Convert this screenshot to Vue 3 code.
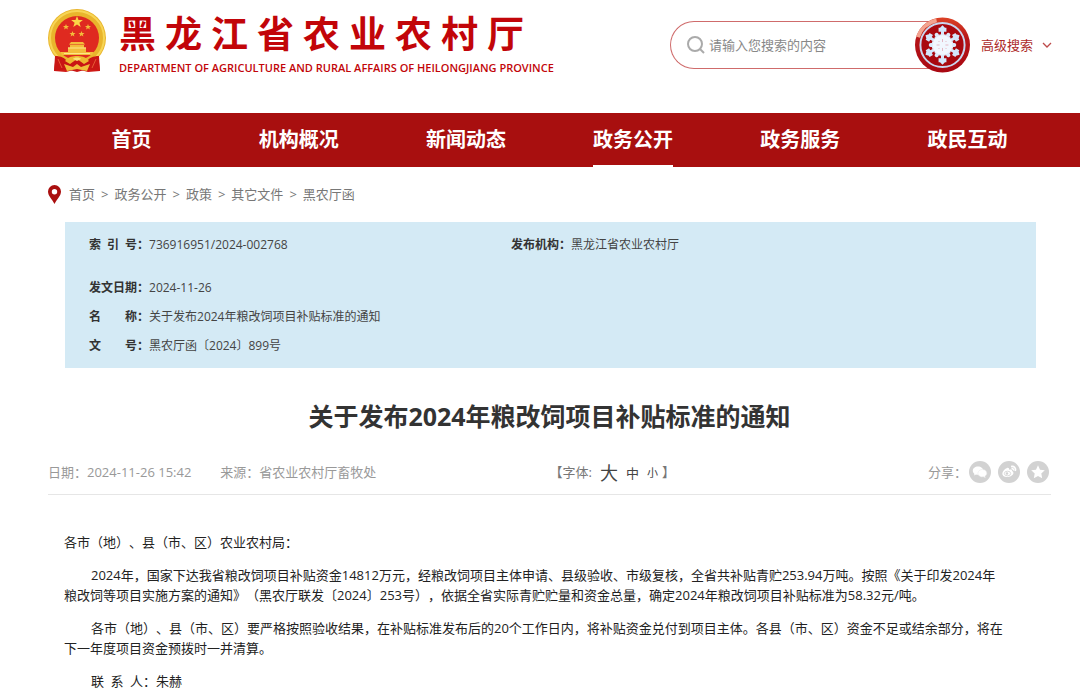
<script setup>
import { ref } from 'vue'

const siteName = [...'黑龙江省农业农村厅']
const keyword = ref('')
const navItems = ['首页', '机构概况', '新闻动态', '政务公开', '政务服务', '政民互动']
const activeNav = '政务公开'
const crumbs = ['首页', '政务公开', '政策', '其它文件', '黑农厅函']
const info = [
  { label: '索 引 号', value: '736916951/2024-002768' },
  { label: '发布机构', value: '黑龙江省农业农村厅' },
  { label: '发文日期', value: '2024-11-26', wide: true },
  { label: '名 称', value: '关于发布2024年粮改饲项目补贴标准的通知', wide: true },
  { label: '文 号', value: '黑农厅函〔2024〕899号', wide: true },
]
const arms = [0, 60, 120, 180, 240, 300]
</script>

<template>
  <div class="page">
    <header class="header">
      <a class="brand" href="#">
        <svg class="emblem" viewBox="0 0 58 64" aria-hidden="true">
          <path d="M8 45 L6 62 L18 63 L29 60 L40 63 L52 62 L50 45 Z" fill="#cf1a17" />
          <circle cx="29" cy="29" r="29" fill="#e9b52c" />
          <circle cx="29" cy="29" r="27" fill="none" stroke="#f7d555" stroke-width="2" />
          <circle cx="29" cy="29" r="22" fill="#df2a20" />
          <path d="M29 7l1.500 4.100h4.400l-3.500 2.700 1.300 4.200-3.700-2.500-3.700 2.500 1.300-4.200-3.500-2.700h4.400z" fill="#fbd646" />
          <g fill="#f3bd3b">
            <path d="M18 15l.8 2h2.200l-1.700 1.400.6 2.200-1.900-1.300-1.900 1.300.6-2.200-1.700-1.400h2.200z" />
            <path d="M40 15l.8 2h2.200l-1.700 1.400.6 2.200-1.900-1.300-1.900 1.300.6-2.200-1.700-1.400h2.200z" />
            <path d="M24.500 22l.8 2h2.200l-1.700 1.400.6 2.200-1.900-1.300-1.900 1.300.6-2.200-1.700-1.400h2.200z" />
            <path d="M33.500 22l.8 2h2.200l-1.700 1.400.6 2.200-1.900-1.300-1.900 1.300.6-2.200-1.700-1.400h2.200z" />
            <path d="M23 33h12l2 2.500H21z" />
            <path d="M22 36h14v2.500h2V43H20v-4.500h2z" />
            <path d="M12 43h34l-2 3H14z" />
          </g>
          <path d="M20 39h18M16 44.500h26" stroke="#fce68a" />
          <path d="M0 46c5 0 9 1 12 3l8 3c-3 4-7 7-14 8zM58 46c-5 0-9 1-12 3l-8 3c3 4 7 7 14 8z" fill="none" />
          <path d="M7 47c6 0 10 2 13 6l9-3 9 3c3-4 7-6 13-6l1 15-12-2-11 3-11-3-12 2z" fill="#c91614" />
          <path d="M19 50c3-4 17-4 20 0l2 2-5 3-7-5-7 5-5-3z" fill="#eeb931" />
          <path d="M25 50c1-2 7-2 8 0l-4 2z" fill="#fbe07a" />
          <path d="M16 55l9 3 4-3 4 3 9-3-3 7-10-2-10 2z" fill="#f0c03a" />
          <path d="M10 50l4 9M48 50l-4 9" stroke="#e65b35" />
        </svg>
        <span class="brand-text">
          <span class="site-name"><span v-for="(c, i) in siteName" :key="i">{{ c }}</span></span>
          <span class="site-en">DEPARTMENT OF AGRICULTURE AND RURAL AFFAIRS OF HEILONGJIANG PROVINCE</span>
        </span>
      </a>

      <form class="search" @submit.prevent>
        <label class="search-box">
          <svg width="18" height="18" viewBox="0 0 18 18" fill="none" stroke="#aaa" stroke-width="2" aria-hidden="true">
            <circle cx="8" cy="8" r="7" />
            <path d="M13 13l4 4" />
          </svg>
          <input v-model="keyword" type="text" placeholder="请输入您搜索的内容" aria-label="搜索" />
        </label>
        <button class="search-btn" type="submit" aria-label="搜索">
          <svg width="55" height="56" viewBox="0 0 56 56" aria-hidden="true">
            <defs>
              <linearGradient id="rim" x1="0" y1="0" x2="0" y2="1">
                <stop offset="0" stop-color="#dc4226" />
                <stop offset="0.400" stop-color="#b51418" />
                <stop offset="1" stop-color="#a90812" />
              </linearGradient>
            </defs>
            <circle cx="28" cy="28" r="28" fill="url(#rim)" />
            <path d="M3 20A26 26 0 0 1 22 3" fill="none" stroke="#f3a38f" stroke-width="4" />
            <circle cx="28" cy="28" r="22.500" fill="#a9080f" stroke="#c9d5ee" stroke-width="2" />
            <g v-for="a in arms" :key="a" :transform="`rotate(${a} 28 28)`">
              <path d="M28 28V11" stroke="#dceafb" stroke-width="3" />
              <path d="M28 8l2.500 2.500H32v4h-2.500L28 17l-1.500-2.500H24v-4h1.500z" fill="#d3e6fb" />
              <path d="M28 28V16" transform="rotate(30 28 28)" stroke="#dceafb" stroke-width="4" stroke-linecap="round" />
              <path d="M28 28V17" transform="rotate(14 28 28)" stroke="#e4effc" stroke-width="2" />
              <path d="M28 28V17" transform="rotate(-14 28 28)" stroke="#e4effc" stroke-width="2" />
            </g>
            <circle cx="28" cy="28" r="10" fill="#f1f7ff" />
            <path d="M28 22v3M28 31v3M22 28h3M31 28h3M24 24l1 1M31 31l1 1M24 32l1-1M31 25l1-1" stroke="#e2b6c2" />
          </svg>
        </button>
        <a class="advanced" href="#">
          高级搜索
          <svg width="10" height="6" viewBox="0 0 10 6" fill="none" stroke="#bd4a4a" stroke-width="1.300" aria-hidden="true"><path d="M1 1l4 4 4-4" /></svg>
        </a>
      </form>
    </header>

    <nav class="nav">
      <a v-for="n in navItems" :key="n" href="#"><span :class="{ active: n === activeNav }">{{ n }}</span></a>
    </nav>

    <div class="crumbs">
      <svg width="13" height="19" viewBox="0 0 13 19" aria-hidden="true">
        <path fill-rule="evenodd" d="M6.500 0A6.500 6.500 0 0 0 0 6.500C0 11 4 14 6.500 19 9 14 13 11 13 6.500A6.500 6.500 0 0 0 6.500 0zm0 4a2.700 2.700 0 1 1 0 5.400 2.700 2.700 0 0 1 0-5.400z" fill="#aa0f0f" />
      </svg>
      <template v-for="(c, i) in crumbs" :key="c">
        <span v-if="i" class="sep">&gt;</span>
        <a href="#">{{ c }}</a>
      </template>
    </div>

    <dl class="info">
      <div v-for="r in info" :key="r.label" class="info-row" :class="{ wide: r.wide }">
        <dt><span class="label">{{ r.label }}</span>：</dt>
        <dd>{{ r.value }}</dd>
      </div>
    </dl>

    <article>
      <h1>关于发布2024年粮改饲项目补贴标准的通知</h1>
      <div class="meta">
        <div class="meta-left">
          <span>日期：2024-11-26 15:42</span>
          <span>来源：省农业农村厅畜牧处</span>
        </div>
        <div class="sizes">
          <span>【字体:</span>
          <button type="button" class="large">大</button>
          <button type="button" class="medium">中</button>
          <button type="button" class="small">小</button>
          <span>】</span>
        </div>
        <div class="share">
          <span>分享：</span>
          <div class="share-links">
            <a href="#" aria-label="微信">
              <svg viewBox="0 0 22 22" aria-hidden="true">
                <circle cx="11" cy="11" r="11" fill="#d2d2d2" />
                <path d="M9 5.500c-3 0-5.200 1.800-5.200 4.200 0 1.300.7 2.400 1.700 3.200l-.5 1.700 2-1c3.600.9 7.200-.9 7.200-3.900 0-2.400-2.200-4.200-5.200-4.200z" fill="#fff" />
                <path d="M13.500 8.500c-2.800 0-4.600 1.700-4.600 3.700 0 2.300 2.400 4.200 5.500 3.600l1.900.9-.4-1.500c1.200-.7 1.900-1.700 1.900-2.900 0-2.100-1.900-3.800-4.300-3.800z" fill="#fff" stroke="#e6e6e6" stroke-width="0.500" />
              </svg>
            </a>
            <a href="#" aria-label="微博">
              <svg viewBox="0 0 22 22" aria-hidden="true">
                <circle cx="11" cy="11" r="11" fill="#d2d2d2" />
                <path d="M9 7c1.500-.5 2.400.2 2 1.700 2-.7 3.500-.2 2.900 1.400 3.400 1.200 1 5.900-4.600 5.900C2 16 3.500 9.500 9 7z" fill="#fff" />
                <ellipse cx="9.500" cy="12.500" rx="3.200" ry="2.300" fill="none" stroke="#d2d2d2" stroke-width="0.800" />
                <circle cx="9" cy="12.500" r="1.200" fill="#d2d2d2" />
                <path d="M13 5.500c3-.8 5.300 1.500 4.300 4.600M13.500 7.500c1.500-.2 2.300.7 2 2" fill="none" stroke="#fff" stroke-width="1.600" />
              </svg>
            </a>
            <a href="#" aria-label="收藏">
              <svg viewBox="0 0 22 22" aria-hidden="true">
                <circle cx="11" cy="11" r="11" fill="#d2d2d2" />
                <path d="M11 4.300l2 4.400 4.800.6-3.500 3.300.9 4.700-4.200-2.300-4.200 2.300.9-4.700-3.500-3.300 4.800-.6z" fill="#fff" />
              </svg>
            </a>
          </div>
        </div>
      </div>

      <div class="content">
        <p class="flush">各市（地）、县（市、区）农业农村局：</p>
        <p>2024年，国家下达我省粮改饲项目补贴资金14812万元，经粮改饲项目主体申请、县级验收、市级复核，全省共补贴青贮253.94万吨。按照《关于印发2024年<br />粮改饲等项目实施方案的通知》（黑农厅联发〔2024〕253号），依据全省实际青贮贮量和资金总量，确定2024年粮改饲项目补贴标准为58.32元/吨。</p>
        <p>各市（地）、县（市、区）要严格按照验收结果，在补贴标准发布后的20个工作日内，将补贴资金兑付到项目主体。各县（市、区）资金不足或结余部分，将在<br />下一年度项目资金预拨时一并清算。</p>
        <p>联&ensp;系&ensp;人：朱赫</p>
      </div>
    </article>
  </div>
</template>

<style>
body {
  margin: 0;
  background: #fff;
}
</style>

<style scoped>
.page {
  font: 13px/20px "Open Sans", "Noto Sans CJK SC", sans-serif;
  text-spacing-trim: space-all;
  color: #222;
}
a {
  color: inherit;
  text-decoration: none;
}
button {
  border: 0;
  padding: 0;
  background: none;
  font-family: inherit;
  color: inherit;
  cursor: pointer;
}
svg {
  display: block;
  flex: none;
}
.header {
  display: flex;
  justify-content: space-between;
  align-items: flex-start;
  height: 104px;
  padding: 9px 28px 0 48px;
}
.brand {
  display: flex;
  gap: 13px;
}
.emblem {
  width: 58px;
  height: 64px;
}
.brand-text {
  display: flex;
  flex-direction: column;
  color: #c20509;
  font-weight: 700;
}
.site-name {
  display: flex;
  gap: 9px;
  font-size: 37px;
  line-height: 50px;
}
.site-en {
  font-size: 11px;
  font-weight: 600;
  line-height: 18px;
  white-space: nowrap;
}
.search {
  display: flex;
  align-items: center;
  padding-top: 12px;
}
.search-box {
  display: flex;
  align-items: center;
  gap: 4px;
  box-sizing: border-box;
  width: 272px;
  height: 48px;
  padding-left: 16px;
  border: 1px solid #cf6b6b;
  border-right: 0;
  border-radius: 24px 0 0 24px;
}
.search-box input {
  width: 190px;
  padding: 0;
  border: 0;
  outline: 0;
  background: none;
  font: inherit;
  color: #555;
}
.search-box input::placeholder {
  color: #888;
  opacity: 1;
}
.search-btn {
  margin: -4px 11px -4px -27px;
}
.advanced {
  display: flex;
  align-items: center;
  gap: 9px;
  color: #ad2a2a;
}
.nav {
  display: grid;
  grid-template-columns: repeat(6, 1fr);
  padding: 2px 29px 0 48px;
  background: #a80f0f;
  color: #fff;
  font-size: 20px;
  font-weight: 700;
}
.nav a {
  display: flex;
  justify-content: center;
}
.nav span {
  line-height: 50px;
  border-bottom: 2px solid transparent;
}
.nav .active {
  border-color: #fff;
}
.crumbs {
  display: flex;
  align-items: center;
  height: 54px;
  padding: 0 0 1px 48px;
  color: #777;
}
.crumbs svg {
  margin-right: 8px;
}
.sep {
  margin: 0 6px;
}
.info {
  display: grid;
  grid-template-columns: 422fr 501fr;
  margin: 0 44px 0 65px;
  padding: 8px 24px;
  background: #d4eaf5;
  color: #444;
  font-size: 12px;
  line-height: 29px;
}
.info-row {
  display: flex;
}
.info-row:nth-child(2) {
  margin-bottom: 14px;
}
.wide {
  grid-column: 1 / -1;
}
dt {
  display: flex;
  font-weight: 700;
  color: #333;
}
.label {
  width: 48px;
  text-align-last: justify;
}
dd {
  margin: 0;
}
h1 {
  margin: 30px 29px 0 48px;
  text-align: center;
  font-size: 25px;
  line-height: 36px;
  color: #333;
}
.meta {
  display: grid;
  grid-template-columns: 50% auto 1fr;
  align-items: center;
  height: 44px;
  margin: 16px 29px 0 48px;
  border-bottom: 1px solid #e6e6e6;
  color: #999;
}
.meta-left {
  display: flex;
  gap: 29px;
}
.sizes {
  display: flex;
  align-items: center;
  color: #777;
}
.sizes button {
  color: #444;
}
.large {
  margin: 0 8px;
  font-size: 18px;
}
.medium {
  margin-right: 8px;
  font-size: 13px;
}
.small {
  margin-right: 4px;
  font-size: 11px;
}
.share {
  display: flex;
  align-items: center;
  justify-content: flex-end;
  gap: 2px;
  padding-right: 2px;
}
.share-links {
  display: flex;
  gap: 7px;
}
.share svg {
  width: 22px;
  height: 22px;
}
.content {
  margin: 37px 44px 0 64px;
}
p {
  margin: 0 0 13px;
  text-indent: 27px;
}
.flush {
  text-indent: 0;
}
</style>
